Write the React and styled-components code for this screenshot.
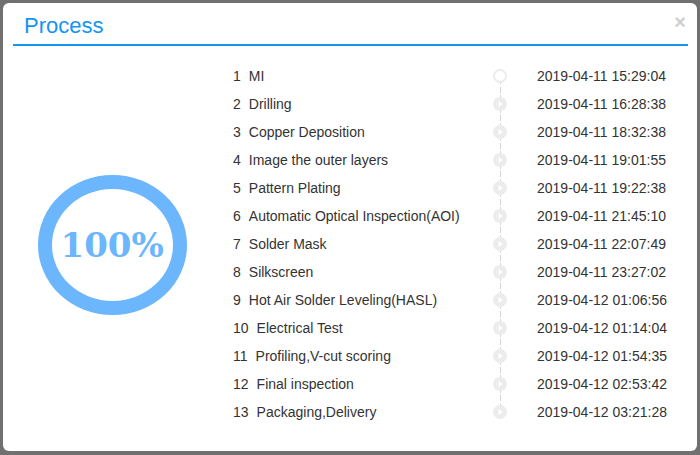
import React from 'react';
import styled, { createGlobalStyle } from 'styled-components';

const GlobalStyle = createGlobalStyle`
  html, body {
    margin: 0;
    padding: 0;
    background: #707070;
    font-family: "Liberation Sans", Arial, sans-serif;
  }
`;

const steps = [
  ['MI', '2019-04-11 15:29:04'],
  ['Drilling', '2019-04-11 16:28:38'],
  ['Copper Deposition', '2019-04-11 18:32:38'],
  ['Image the outer layers', '2019-04-11 19:01:55'],
  ['Pattern Plating', '2019-04-11 19:22:38'],
  ['Automatic Optical Inspection(AOI)', '2019-04-11 21:45:10'],
  ['Solder Mask', '2019-04-11 22:07:49'],
  ['Silkscreen', '2019-04-11 23:27:02'],
  ['Hot Air Solder Leveling(HASL)', '2019-04-12 01:06:56'],
  ['Electrical Test', '2019-04-12 01:14:04'],
  ['Profiling,V-cut scoring', '2019-04-12 01:54:35'],
  ['Final inspection', '2019-04-12 02:53:42'],
  ['Packaging,Delivery', '2019-04-12 03:21:28'],
];

const Modal = styled.div`
  margin: 3px;
  width: 694px;
  height: 448px;
  box-sizing: border-box;
  background: #fff;
  border-radius: 6px;
  position: relative;
  display: flex;
  flex-direction: column;
`;

const Header = styled.div`
  margin: 0 9px 0 10px;
  height: 41px;
  border-bottom: 2px solid #1296f2;
  display: flex;
  align-items: center;
`;

const Title = styled.h2`
  margin: 0 0 0 11px;
  font-size: 22px;
  font-weight: normal;
  color: #1296f2;
  padding-top: 4px;
`;

const Close = styled.span`
  position: absolute;
  top: 9px;
  right: 11px;
  font-size: 20px;
  font-weight: bold;
  color: #cfcfcf;
  line-height: 1;
`;

const Body = styled.div`
  display: flex;
  padding-top: 16px;
`;

const Gauge = styled.div`
  width: 230px;
  display: flex;
  align-items: center;
  justify-content: center;
  padding-right: 12px;
  box-sizing: border-box;
`;

const Ring = styled.div`
  width: 149px;
  height: 140px;
  box-sizing: border-box;
  border: 14px solid #6bb6fc;
  border-radius: 50%;
  display: flex;
  align-items: center;
  justify-content: center;
  margin-top: 2px;
`;

const Percent = styled.span`
  font-family: "DejaVu Serif", "Liberation Serif", serif;
  font-weight: bold;
  font-size: 33px;
  color: #6bb6fc;
  transform: scaleX(1.03);
`;

const List = styled.div`
  display: flex;
  flex-direction: column;
`;

const Row = styled.div`
  display: grid;
  grid-template-columns: 255px 24px auto;
  align-items: center;
  height: 28px;
  font-size: 14px;
  color: #333;
`;

const Label = styled.div`
  display: flex;
  white-space: nowrap;
`;

const Num = styled.span`
  margin-right: 8px;
`;

const Node = styled.div`
  position: relative;
  height: 28px;
  display: flex;
  align-items: center;
  justify-content: center;

  &::before {
    content: '';
    position: absolute;
    left: 50%;
    top: ${(p) => (p.$first ? '50%' : '0')};
    bottom: ${(p) => (p.$last ? '50%' : '0')};
    border-left: 1px dashed #d4d4d4;
  }
`;

const Dot = styled.span`
  position: relative;
  width: 14px;
  height: 14px;
  box-sizing: border-box;
  border-radius: 50%;
  background: ${(p) => (p.$ring ? '#fff' : '#ececec')};
  border: ${(p) => (p.$ring ? '2.5px solid #ececec' : 'none')};
  display: flex;
  align-items: center;
  justify-content: center;
`;

const Time = styled.div`
  padding-left: 25px;
  white-space: nowrap;
`;

function PlayDot() {
  return (
    <Dot>
      <svg width="14" height="14" viewBox="0 0 14 14">
        <path d="M5.5 3.8 L9.8 7 L5.5 10.2 Z" fill="#fff" />
      </svg>
    </Dot>
  );
}

export default function App() {
  return (
    <>
      <GlobalStyle />
      <Modal>
        <Header>
          <Title>Process</Title>
        </Header>
        <Close>×</Close>
        <Body>
          <Gauge>
            <Ring>
              <Percent>100%</Percent>
            </Ring>
          </Gauge>
          <List>
            {steps.map(([name, time], i) => (
              <Row key={name}>
                <Label>
                  <Num>{i + 1}</Num>
                  {name}
                </Label>
                <Node $first={i === 0} $last={i === steps.length - 1}>
                  {i === 0 ? <Dot $ring /> : <PlayDot />}
                </Node>
                <Time>{time}</Time>
              </Row>
            ))}
          </List>
        </Body>
      </Modal>
    </>
  );
}
